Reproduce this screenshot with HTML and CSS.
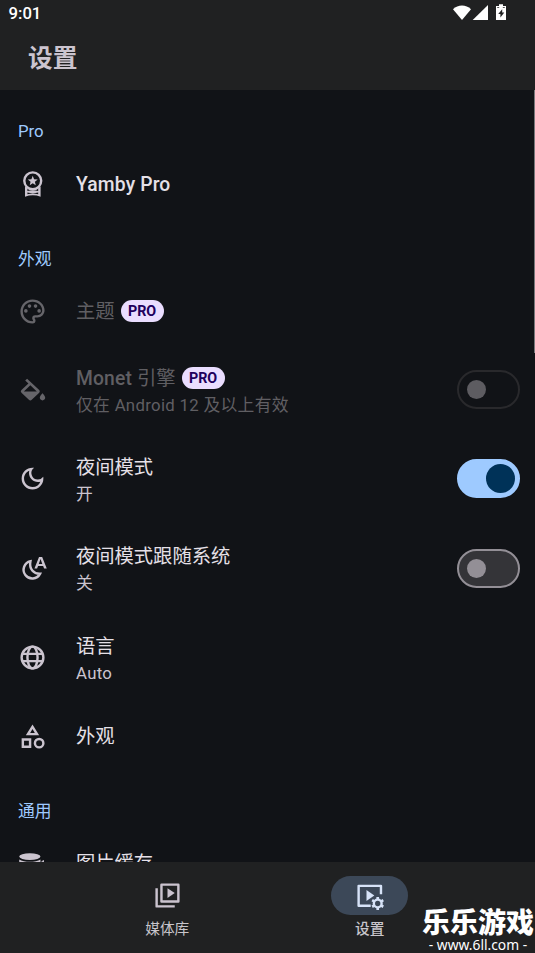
FILE: index.html
```html
<!DOCTYPE html>
<html lang="zh-CN">
<head>
<meta charset="utf-8">
<title>设置</title>
<link rel="stylesheet" href="styles.css">
</head>
<body>
<div class="app">
  <header class="top">
    <div class="status">
      <span>9:01</span>
      <svg class="status-icons" viewBox="0 0 54 18"><path d="M0 5.2C5 .4 13 .4 18 5.2L9 16z"/><path d="M19.7 16H35V1z"/><path fill-rule="evenodd" d="M43 2h3V.3h4V2h3v14h-10zM49.2 5.2l-4 4.7h2.2v3.5l3.9-4.8h-2.1zM44.2 3.3v.8h2v-.8zm5.6 0v.8h2v-.8z"/></svg>
    </div>
    <h1>设置</h1>
  </header>
  <main class="list">
    <h2>Pro</h2>
    <div class="row">
      <svg class="icon" viewBox="0 0 24 24"><circle cx="12.2" cy="9.8" r="7" class="line"/><path fill-rule="evenodd" d="M5.8 14.500l2 1.500v2.200c3-.8 6-.8 8.900 0V16l2-1.500v8.400c-4.200-1.500-8.700-1.500-12.900 0zM7.800 19.500v1.300c3-.8 5.900-.8 8.900 0v-1.300c-3 .7-5.900.7-8.900 0z"/><path d="M12.2 5.500l1.100 2.900 3 .2-2.300 1.900.7 3-2.500-1.700-2.500 1.700.7-3-2.300-1.900 3-.2z"/></svg>
      <div class="text"><div class="title latin">Yamby Pro</div></div>
    </div>
    <h2>外观</h2>
    <div class="row disabled">
      <svg class="icon" viewBox="0 0 24 24"><path d="M12 22C6.49 22 2 17.51 2 12S6.49 2 12 2s10 4.04 10 9c0 3.31-2.69 6-6 6h-1.77c-.28 0-.5.22-.5.5 0 .12.05.23.13.33.41.47.64 1.06.64 1.67A2.5 2.5 0 0 1 12 22zm0-18c-4.41 0-8 3.59-8 8s3.59 8 8 8c.28 0 .5-.22.5-.5a.54.54 0 0 0-.14-.35c-.41-.46-.63-1.05-.63-1.65a2.5 2.5 0 0 1 2.5-2.5H16c2.21 0 4-1.79 4-4 0-3.86-3.59-7-8-7z"/><circle cx="6.5" cy="11.5" r="1.5"/><circle cx="9.5" cy="7.5" r="1.5"/><circle cx="14.5" cy="7.5" r="1.5"/><circle cx="17.5" cy="11.5" r="1.5"/></svg>
      <div class="text"><div class="title">主题<span class="badge">PRO</span></div></div>
    </div>
    <div class="row double disabled">
      <svg class="icon" viewBox="0 0 24 24"><path d="M16.56 8.94L7.62 0 6.21 1.41l2.38 2.38-5.15 5.15a1.49 1.49 0 0 0 0 2.12l5.5 5.5c.29.29.68.44 1.06.44s.77-.15 1.06-.44l5.5-5.5c.59-.58.59-1.53 0-2.12zM5.21 10L10 5.21 14.79 10zM19 11.5s-2 2.17-2 3.5c0 1.1.9 2 2 2s2-.9 2-2c0-1.33-2-3.5-2-3.5z" transform="translate(-1 3)scale(1.12 1.06)"/></svg>
      <div class="text"><div class="title"><span class="latin">Monet</span><span class="tail">引擎</span><span class="badge">PRO</span></div><div class="sub">仅在 Android 12 及以上有效</div></div>
      <span class="switch"></span>
    </div>
    <div class="row double">
      <svg class="icon" viewBox="0 0 24 24"><path d="M9.37 5.51A7.35 7.35 0 0 0 9.1 7.5c0 4.08 3.32 7.4 7.4 7.4.68 0 1.35-.09 1.99-.27A7.014 7.014 0 0 1 12 19c-3.86 0-7-3.14-7-7 0-2.93 1.81-5.45 4.37-6.49zM12 3a9 9 0 1 0 9 9c0-.46-.04-.92-.1-1.36a5.389 5.389 0 0 1-4.4 2.26 5.403 5.403 0 0 1-3.14-9.8c-.44-.06-.9-.1-1.36-.1z"/></svg>
      <div class="text"><div class="title">夜间模式</div><div class="sub">开</div></div>
      <span class="switch on"></span>
    </div>
    <div class="row double">
      <svg class="icon" viewBox="0 0 24 24"><path class="line" d="M10.300 6A7.200 7.200 0 1 0 18.200 16.400C13 16.600 9 12.500 10.300 6z" stroke-width="2.300"/><path fill-rule="evenodd" d="M17.400 2.500h2.600l3.800 9.600h-2.200l-.8-2.200h-4.200l-.8 2.200h-2.200zM17.200 8.200h2.900l-1.450-4z"/></svg>
      <div class="text"><div class="title">夜间模式跟随系统</div><div class="sub">关</div></div>
      <span class="switch off"></span>
    </div>
    <div class="row double">
      <svg class="icon" viewBox="0 0 24 24"><g class="line"><circle cx="12" cy="12" r="9"/><ellipse cx="12" cy="12" rx="4.2" ry="9"/><path d="M3.8 9h16.4M3.8 15h16.4"/></g></svg>
      <div class="text"><div class="title">语言</div><div class="sub">Auto</div></div>
    </div>
    <div class="row">
      <svg class="icon" viewBox="0 0 24 24"><path d="M12 2l-5.500 9h11L12 2zm0 3.840L13.930 9h-3.870L12 5.840zM17.500 13a4.500 4.500 0 1 0 0 9 4.500 4.500 0 0 0 0-9zm0 7a2.500 2.500 0 0 1 0-5 2.500 2.500 0 0 1 0 5zM3 21.500h8v-8H3v8zm2-6h4v4H5v-4z"/></svg>
      <div class="text"><div class="title">外观</div></div>
    </div>
    <h2>通用</h2>
    <div class="row">
      <svg class="icon" viewBox="0 0 24 24"><ellipse cx="9.8" cy="6.300" rx="8.800" ry="2.700"/><path d="M1 8.600c4 2.700 13.600 2.700 17.600 0v12H1zM19 10.300l2.500-1.300v2z"/></svg>
      <div class="text"><div class="title">图片缓存</div></div>
    </div>
    <span class="scrollbar"></span>
  </main>
  <nav class="nav">
    <div class="tab">
      <span class="pill"><svg class="icon" viewBox="0 0 24 24"><path class="line" d="M7 3h14v14H7zM3 6v15h15" stroke-linejoin="round"/><path d="M12 6v8l6-4z"/></svg></span>
      <span>媒体库</span>
    </div>
    <div class="tab active">
      <span class="pill"><svg class="icon" viewBox="0 0 24 24"><path class="line" d="M13 20.500H3V4h18.500v7" stroke-linejoin="round"/><path d="M9.500 7.500v9l6.500-4.500z"/><circle class="line" cx="18.800" cy="18.600" r="3.200"/><path class="cog" d="M18.800 13.300v2.200M18.800 21.700v2.200M14.200 15.900l1.900 1.100M21.500 20.200l1.900 1.100M14.200 21.300l1.900-1.100M21.500 17l1.900-1.100"/></svg></span>
      <span>设置</span>
    </div>
    <div class="watermark"><b>乐乐游戏</b><span>- www.6ll.com -</span></div>
  </nav>
</div>
</body>
</html>
```

FILE: styles.css
```css
* { box-sizing: border-box; }
body { margin: 0; background: #111317; font-family: Roboto, "Noto Sans CJK SC", sans-serif; }
.app { width: 535px; height: 953px; display: flex; flex-direction: column; overflow: hidden; }
.top { height: 90px; flex: none; background: #202122; color: #cbc4cf; }
.status { display: flex; justify-content: space-between; height: 26px; padding: 0 28px 0 8.5px; color: #fff; font-size: 16.7px; font-weight: 500; line-height: 27px; }
.status-icons { width: 54px; height: 18px; margin-top: 4px; fill: #fff; }
h1 { margin: 13px 0 0 28px; font-size: 24.7px; line-height: 40px; font-weight: 700; }
.list { flex: 1; min-height: 0; position: relative; overflow: hidden; }
h2 { margin: 0; height: 59.5px; padding: 29px 18px 0; color: #9ecaff; font-size: 16.8px; line-height: 24px; font-weight: 400; }
.row { height: 68px; display: flex; align-items: center; padding: 0 15px 0 18px; color: #e5e0e7; }
.double { height: 89.3px; }
.icon { width: 29px; height: 29px; flex: none; fill: #cbc4cf; color: #cbc4cf; overflow: visible; }
.line { fill: none; stroke: currentColor; stroke-width: 2; }
.cog { stroke: currentColor; stroke-width: 2.2; }
.text { flex: 1; margin-left: 29px; padding-top: 1px; }
.double .text { padding-top: 3px; }
.title { display: flex; align-items: center; font-size: 19.3px; line-height: 28px; font-weight: 400; }
.latin { font-weight: 500; letter-spacing: .15px; }
.row .title.latin { padding-top: 1px; }
.tail { margin-left: 5px; }
.sub { color: #cbc4cf; font-size: 16.8px; line-height: 25px; letter-spacing: .3px; }
.disabled .title, .disabled .sub { color: #605f63; }
.disabled .icon { fill: #66656a; color: #66656a; }
.badge { margin: -2px 0 0 6px; width: 43px; height: 22px; border-radius: 11px; background: #eaddff; color: #21005d; font-size: 14.3px; line-height: 22px; font-weight: 700; text-align: center; }
.switch { width: 63px; height: 39px; border: 2px solid #29292c; border-radius: 20px; display: flex; align-items: center; padding-left: 8px; }
.switch::before { content: ""; width: 19px; height: 19px; border-radius: 50%; background: #5d5c61; }
.on { background: #9ecaff; border-color: #9ecaff; padding-left: 27px; }
.on::before { width: 29px; height: 29px; background: #003258; }
.off { background: #343438; border-color: #938f96; }
.off::before { background: #938f96; }
.scrollbar { position: absolute; right: 0; top: 0; width: 1px; height: 263px; background: #77777a; }
.nav { height: 91px; flex: none; position: relative; display: flex; padding: 14px 64px 0 66px; background: #202122; color: #c8c5cb; font-size: 14.7px; font-weight: 400; }
.tab { flex: 1; display: flex; flex-direction: column; align-items: center; line-height: 28px; }
.active { font-weight: 500; }
.pill { width: 77px; height: 39px; border-radius: 20px; display: flex; align-items: center; justify-content: center; }
.active .pill { background: #3c4858; }
.active .icon { fill: #d7e3f8; color: #d7e3f8; }
.watermark { position: absolute; left: 421px; top: 43px; width: 114px; text-align: center; color: #fff; white-space: nowrap; }
.watermark b { display: block; font-family: "Noto Sans CJK SC", sans-serif; font-size: 28px; line-height: 32px; font-weight: 900; }
.watermark span { display: block; font-family: "Noto Sans", sans-serif; font-size: 13.8px; line-height: 15px; font-weight: 400; }
```
